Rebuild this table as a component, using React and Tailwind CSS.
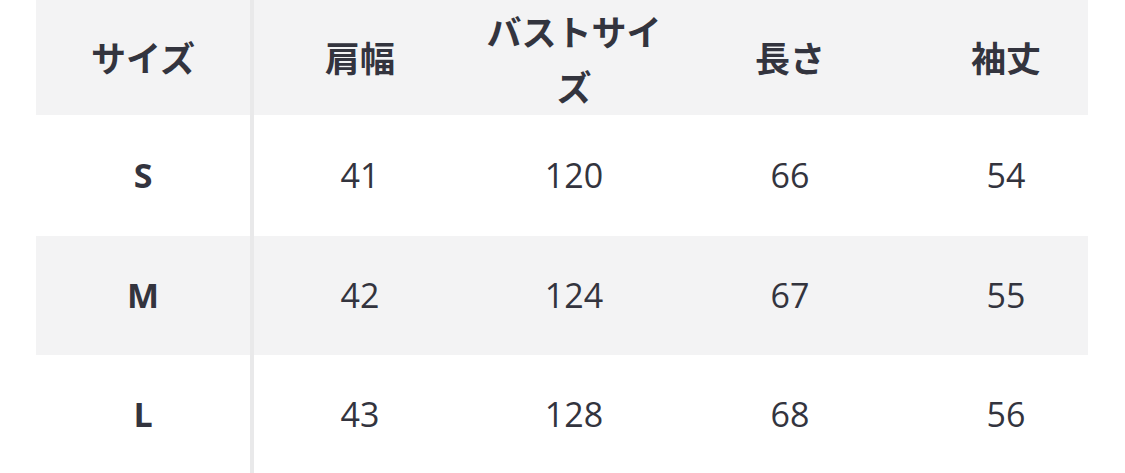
export default function App() {
  const rows = [
    { size: "S", vals: ["41", "120", "66", "54"], bg: "bg-white", h: "h-[121px]" },
    { size: "M", vals: ["42", "124", "67", "55"], bg: "bg-[#f3f3f4]", h: "h-[119px]" },
    { size: "L", vals: ["43", "128", "68", "56"], bg: "bg-white", h: "h-[118px]" },
  ];
  const jp = { fontFamily: '"Noto Sans CJK JP", "Noto Sans", sans-serif' };
  const num = { fontFamily: '"Open Sans", "Noto Sans", sans-serif' };
  const grid = "grid grid-cols-[218px_212px_216px_216px_216px]";
  return (
    <div className="w-[1125px] h-[473px] bg-white overflow-hidden">
      <div className="ml-[36px] w-[1052px] text-[#33343e]">
        <div className={`${grid} h-[115px] bg-[#f3f3f4] text-[35px] font-bold`} style={jp}>
          <div className="flex items-center justify-center border-r-4 border-[#e9e9ea]">サイズ</div>
          <div className="flex items-center justify-center">肩幅</div>
          <div className="flex items-center justify-center px-[20px] text-center leading-[55px]">バストサイズ</div>
          <div className="flex items-center justify-center">長さ</div>
          <div className="flex items-center justify-center">袖丈</div>
        </div>
        {rows.map((r) => (
          <div key={r.size} className={`${grid} ${r.h} ${r.bg} text-[34px]`} style={num}>
            <div className="flex items-center justify-center border-r-4 border-[#e9e9ea] font-bold">{r.size}</div>
            {r.vals.map((v, i) => (
              <div key={i} className="flex items-center justify-center">{v}</div>
            ))}
          </div>
        ))}
      </div>
    </div>
  );
}
